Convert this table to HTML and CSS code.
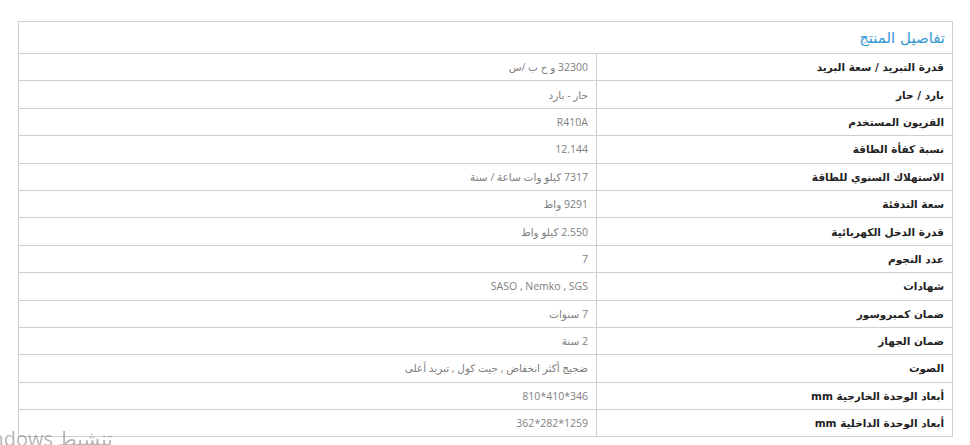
FILE: index.html
```html
<!DOCTYPE html>
<html lang="ar" dir="rtl">
<head>
    <meta charset="UTF-8">
    <title>تفاصيل المنتج</title>
    <link rel="stylesheet" href="styles.css">
</head>
<body>

<div class="container">
    <table class="specs">
        <colgroup>
            <col class="col-label">
            <col class="col-value">
        </colgroup>
        <thead>
            <tr>
                <th colspan="2">تفاصيل المنتج</th>
            </tr>
        </thead>
        <tbody>
            <tr><td class="label">قدرة التبريد / سعة البريد</td><td class="value">32300 و ح ب /س</td></tr>
            <tr><td class="label">بارد / حار</td><td class="value">حار - بارد</td></tr>
            <tr><td class="label">الفريون المستخدم</td><td class="value">R410A</td></tr>
            <tr><td class="label">نسبة كفأة الطاقة</td><td class="value">12.144</td></tr>
            <tr><td class="label">الاستهلاك السنوي للطاقة</td><td class="value">7317 كيلو وات ساعة / سنة</td></tr>
            <tr><td class="label">سعة التدفئة</td><td class="value">9291 واط</td></tr>
            <tr><td class="label">قدرة الدخل الكهربائية</td><td class="value">2.550 كيلو واط</td></tr>
            <tr><td class="label">عدد النجوم</td><td class="value">7</td></tr>
            <tr><td class="label">شهادات</td><td class="value">SASO , Nemko , SGS</td></tr>
            <tr><td class="label">ضمان كمبروسور</td><td class="value">7 سنوات</td></tr>
            <tr><td class="label">ضمان الجهاز</td><td class="value">2 سنة</td></tr>
            <tr><td class="label">الصوت</td><td class="value">ضجيج أكثر انخفاض , جيت كول , تبريد أعلى</td></tr>
            <tr><td class="label">أبعاد الوحدة الخارجية mm</td><td class="value">346*410*810</td></tr>
            <tr><td class="label">أبعاد الوحدة الداخلية mm</td><td class="value">1259*282*362</td></tr>
        </tbody>
    </table>
</div>

<div class="watermark">تنشيط Windows</div>

</body>
</html>
```

FILE: styles.css
```css
body {
    font-family: 'DejaVu Sans', sans-serif;
    margin: 0;
    padding: 0;
    background: #fff;
}
.container {
    direction: ltr;
    padding-top: 21px;
    padding-left: 18px;
}
.specs {
    direction: rtl;
    width: 935px;
    border-collapse: collapse;
    table-layout: fixed;
}
.col-label {
    width: 356px;
}
.specs th {
    height: 31px;
    padding: 0 7px 0 0;
    border: 1px solid #cfcfcf;
    text-align: right;
    font-weight: normal;
    font-size: 15px;
    color: #3597d3;
}
.specs td {
    height: 26.4px;
    padding: 0 8px 0 0;
    border: 1px solid #cfcfcf;
    text-align: right;
    vertical-align: middle;
}
.label {
    font-size: 10.5px;
    font-weight: bold;
    color: #222;
}
.value {
    font-family: 'Open Sans', 'DejaVu Sans', sans-serif;
    font-size: 10.5px;
    color: #808080;
}
.watermark {
    position: fixed;
    left: -32px;
    bottom: -7px;
    font-family: 'Open Sans', 'DejaVu Sans', sans-serif;
    font-size: 20px;
    color: rgba(120, 120, 120, 0.55);
    direction: rtl;
    white-space: nowrap;
}
```
